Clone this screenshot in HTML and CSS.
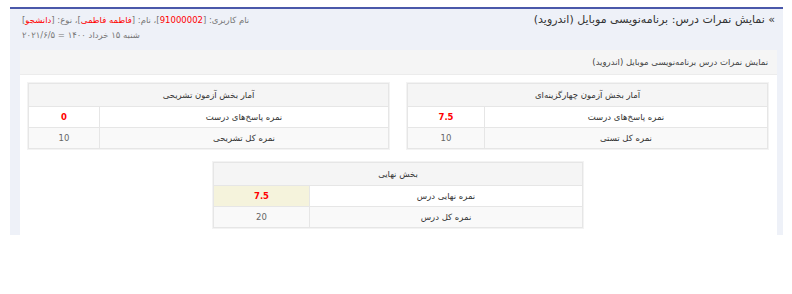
FILE: index.html
```html
<!DOCTYPE html>
<html lang="fa" dir="rtl">
<head>
    <meta charset="UTF-8">
    <title>نمایش نمرات درس</title>
    <link rel="stylesheet" href="styles.css">
</head>
<body>

<!-- قاب اصلی -->
<div class="page-box">
    <div class="page-head">
        <div class="page-title">» نمایش نمرات درس: برنامه&zwnj;نویسی موبایل (اندروید)</div>
        <div class="user-info">
            <div>نام کاربری: [<span class="red">91000002</span>]، نام: [<span class="red">فاطمه فاطمی</span>]، نوع: [<span class="red">دانشجو</span>]</div>
            <div class="date-line">شنبه ۱۵ خرداد ۱۴۰۰ = ۲۰۲۱/۶/۵</div>
        </div>
    </div>

    <!-- پنل نمرات -->
    <div class="panel">
        <div class="panel-head">نمایش نمرات درس برنامه&zwnj;نویسی موبایل (اندروید)</div>
        <div class="panel-body">
            <div class="tables-row">
                <table class="score-table test-table">
                    <tr class="head-row"><td colspan="2">آمار بخش آزمون چهارگزینه&zwnj;ای</td></tr>
                    <tr>
                        <td>نمره پاسخ&zwnj;های درست</td>
                        <td class="val red bold">7.5</td>
                    </tr>
                    <tr class="alt">
                        <td>نمره کل تستی</td>
                        <td class="val">10</td>
                    </tr>
                </table>

                <table class="score-table essay-table">
                    <tr class="head-row"><td colspan="2">آمار بخش آزمون تشریحی</td></tr>
                    <tr>
                        <td>نمره پاسخ&zwnj;های درست</td>
                        <td class="val red bold">0</td>
                    </tr>
                    <tr class="alt">
                        <td>نمره کل تشریحی</td>
                        <td class="val">10</td>
                    </tr>
                </table>
            </div>

            <table class="score-table final-table">
                <tr class="head-row"><td colspan="2">بخش نهایی</td></tr>
                <tr>
                    <td>نمره نهایی درس</td>
                    <td class="val red bold highlight">7.5</td>
                </tr>
                <tr class="alt">
                    <td>نمره کل درس</td>
                    <td class="val">20</td>
                </tr>
            </table>
        </div>
    </div>
</div>

</body>
</html>
```

FILE: styles.css
```css
/* پایه */
body {
    margin: 7px 9px 0 10px;
    font-family: "DejaVu Sans", sans-serif;
    font-size: 8.5px;
    color: #333;
    background: #fff;
}

.red {
    color: #f00;
}

.bold {
    font-weight: bold;
}

/* قاب اصلی */
.page-box {
    background: #eef1f8;
    border-top: 2px solid #4a58aa;
    padding: 0 6px 0 10px;
}

.page-head {
    display: flex;
    justify-content: space-between;
    align-items: flex-start;
    height: 41px;
}

.page-title {
    font-size: 11px;
    color: #333;
    padding-top: 4px;
    padding-right: 2px;
}

.user-info {
    text-align: left;
    color: #777;
    font-size: 8.5px;
    padding-top: 6px;
    padding-left: 2px;
}

.date-line {
    margin-top: 5px;
}

/* پنل */
.panel {
    background: #fff;
    height: 185px;
}

.panel-head {
    background: #f5f5f5;
    border-bottom: 1px solid #ececec;
    height: 24px;
    line-height: 24px;
    padding-right: 9px;
    color: #444;
}

.panel-body {
    padding: 8px 9px 0 8px;
}

.tables-row {
    display: flex;
    justify-content: space-between;
    margin-bottom: 13px;
}

/* جدول‌ها */
.score-table {
    border-collapse: collapse;
    border: 1px solid #e8e8e8;
    box-shadow: 0 0 0 1px #f3f3f3;
}

.test-table,
.essay-table {
    width: 361px;
}

.final-table {
    width: 370px;
    margin: 0 auto;
}

.score-table td {
    border: 1px solid #e6e6e6;
    text-align: center;
    height: 20px;
    padding: 0 6px;
}

.score-table .head-row td {
    background: #f5f5f5;
    height: 22px;
}

.score-table .alt td {
    background: #f9f9f9;
}

.score-table .val {
    color: #666;
}

.score-table .val.red {
    color: #f00;
}

.test-table .val {
    width: 64px;
}

.essay-table .val {
    width: 58px;
}

.final-table .val {
    width: 83px;
}

.highlight {
    background: #f5f3dc;
}
```
